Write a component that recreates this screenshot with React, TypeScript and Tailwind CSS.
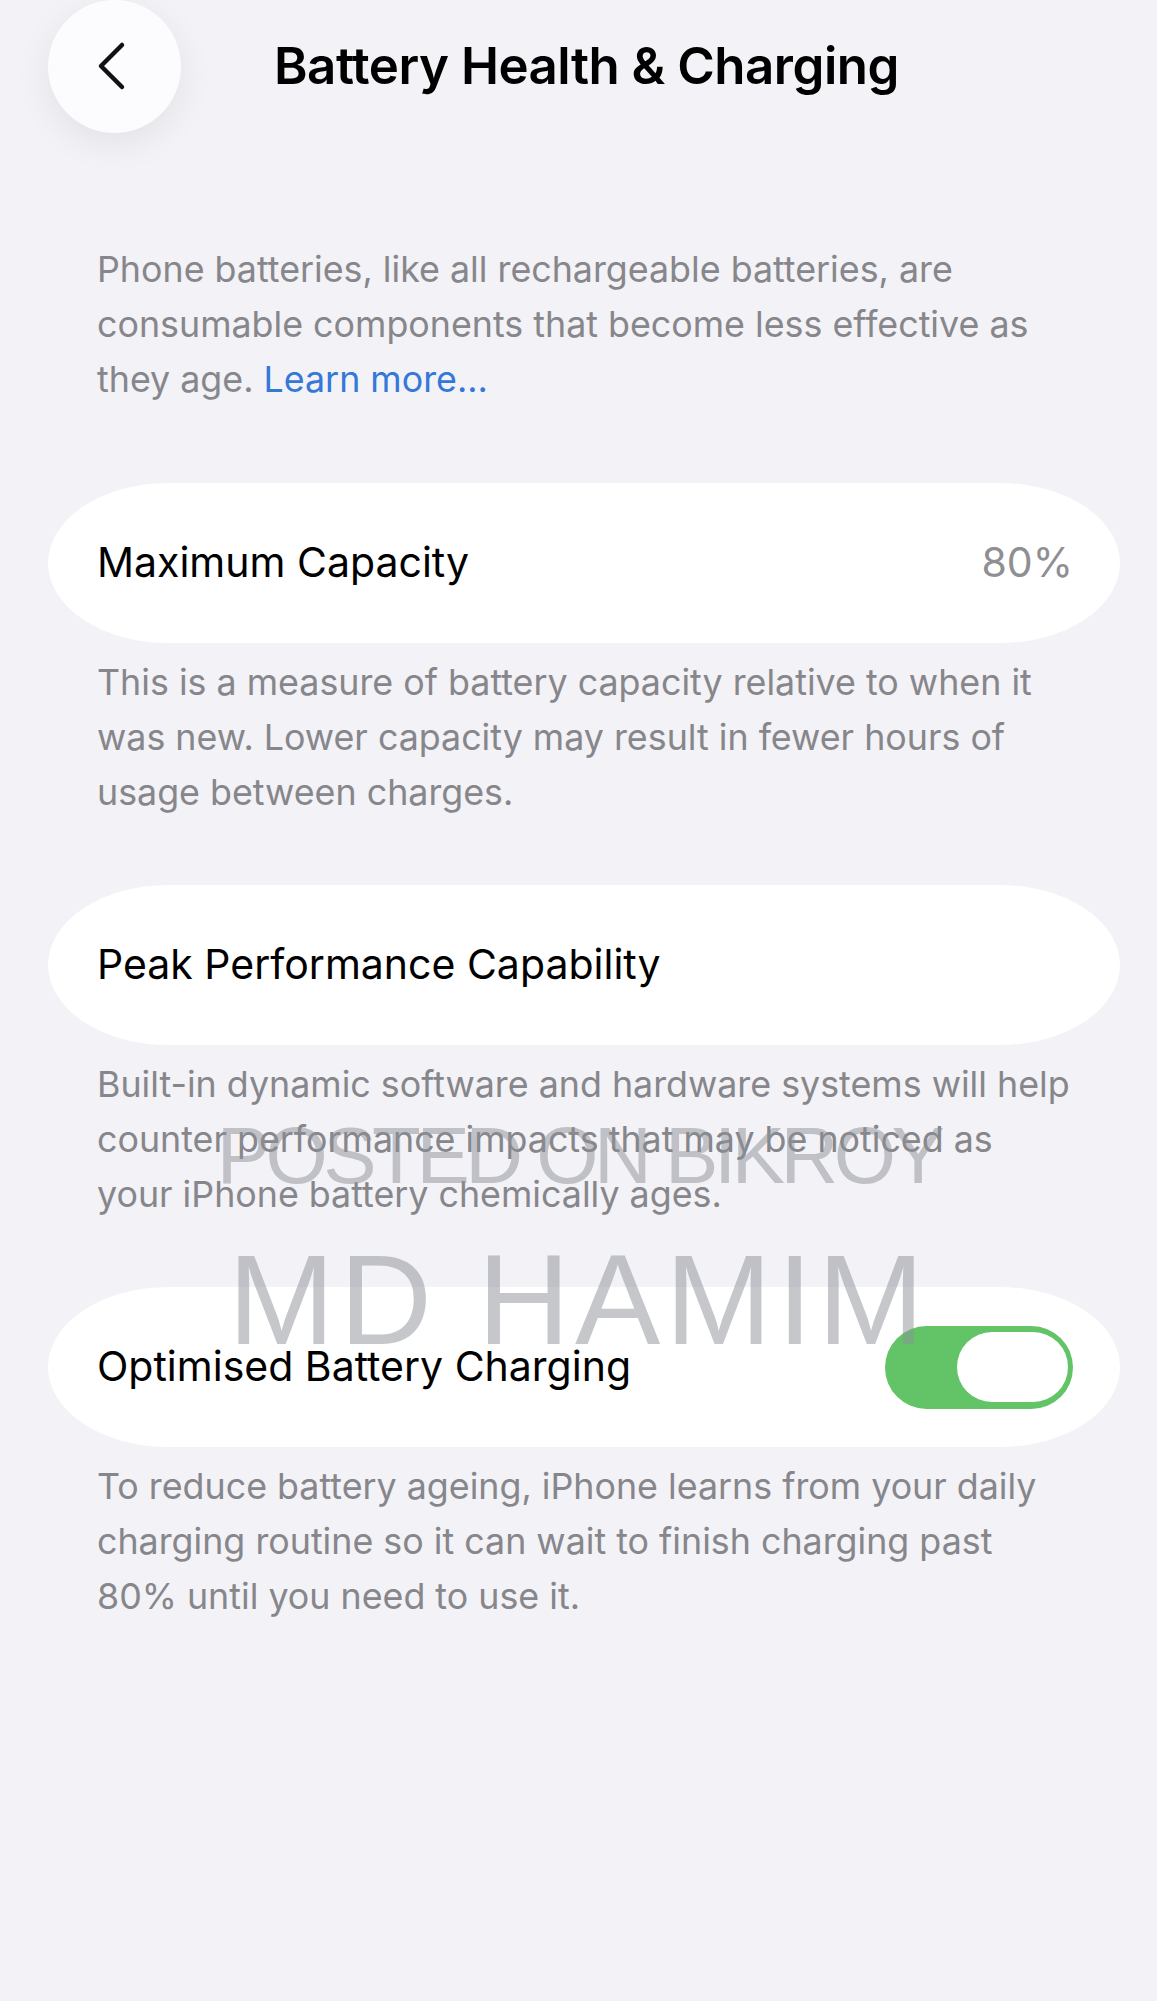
import { ReactNode } from "react";

const Lines = ({ lines, className = "" }: { lines: ReactNode[]; className?: string }) => (
  <p className={`px-[49px] text-[35.8px] leading-[55px] text-[#86868b] ${className}`}>
    {lines.map((l, i) => (
      <span key={i} className="block whitespace-nowrap">
        {l}
      </span>
    ))}
  </p>
);

const Card = ({ children }: { children: ReactNode }) => (
  <div className="h-[160px] rounded-[120px/80px] bg-white flex items-center justify-between pl-[49px] pr-[47px]">
    {children}
  </div>
);

const App = () => {
  return (
    <div className="relative min-h-[2001px] overflow-hidden bg-[#f2f2f7] font-['Inter',sans-serif] text-black">
      <header className="flex h-[132px] items-center">
        <button className="ml-[48px] flex h-[133px] w-[133px] shrink-0 items-center justify-center rounded-full bg-[#fcfcfe] pr-[8px] shadow-[0_10px_36px_rgba(0,0,0,0.07)]">
          <svg width="32" height="50" viewBox="0 0 32 50" fill="none">
            <path d="M27 4 L6 25 L27 46" stroke="#111" strokeWidth="4.5" strokeLinecap="round" strokeLinejoin="round" />
          </svg>
        </button>
        <h1 className="ml-[93px] text-[51px] font-semibold tracking-[-0.5px] whitespace-nowrap">
          Battery Health &amp; Charging
        </h1>
      </header>

      <main className="pl-[48px] pr-[37px]">
        <Lines
          className="mt-[110px]"
          lines={[
            "Phone batteries, like all rechargeable batteries, are",
            "consumable components that become less effective as",
            <>
              they age. <span className="text-[#3478d8]">Learn more...</span>
            </>,
          ]}
        />

        <div className="mt-[76px]">
          <Card>
            <span className="text-[41px]">Maximum Capacity</span>
            <span className="text-[41px] text-[#8e8e93]">80%</span>
          </Card>
        </div>
        <Lines
          className="mt-[12px]"
          lines={[
            "This is a measure of battery capacity relative to when it",
            "was new. Lower capacity may result in fewer hours of",
            "usage between charges.",
          ]}
        />

        <div className="mt-[65px]">
          <Card>
            <span className="text-[41px]">Peak Performance Capability</span>
          </Card>
        </div>
        <Lines
          className="mt-[12px]"
          lines={[
            "Built-in dynamic software and hardware systems will help",
            "counter performance impacts that may be noticed as",
            "your iPhone battery chemically ages.",
          ]}
        />

        <div className="mt-[65px]">
          <Card>
            <span className="text-[41px]">Optimised Battery Charging</span>
            <div className="flex h-[83px] w-[188px] items-center justify-end rounded-full bg-[#62c466] pr-[5px]">
              <div className="h-[70px] w-[111px] rounded-full bg-white" />
            </div>
          </Card>
        </div>
        <Lines
          className="mt-[12px]"
          lines={[
            "To reduce battery ageing, iPhone learns from your daily",
            "charging routine so it can wait to finish charging past",
            "80% until you need to use it.",
          ]}
        />
      </main>

      {/* watermark */}
      <div className="pointer-events-none absolute inset-x-0 top-[1116px] flex flex-col items-center font-['Liberation_Sans',sans-serif] text-[rgba(140,143,150,0.5)]">
        <span className="text-[80px] leading-[80px] tracking-[-4.5px] whitespace-nowrap">POSTED ON BIKROY</span>
        <span className="mt-[40px] text-[128px] leading-[128px] tracking-[5px] whitespace-nowrap">MD HAMIM</span>
      </div>
    </div>
  );
};

export default App;
